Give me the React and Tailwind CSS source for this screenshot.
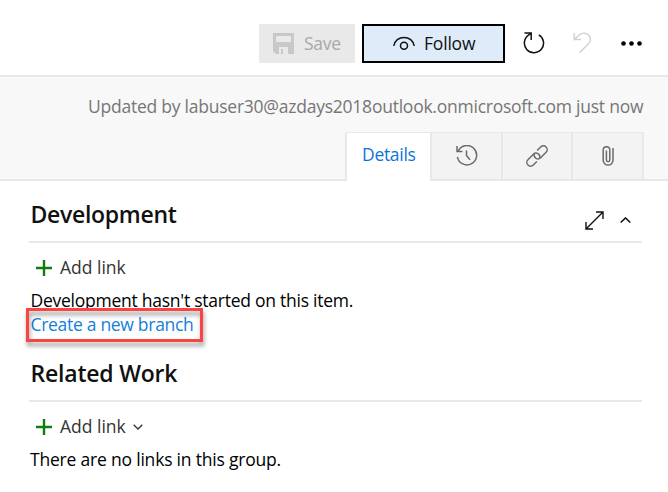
import React from "react";

function SaveIcon() {
  return (
    <svg className="h-[21px] w-[21px]" viewBox="0 0 21 21">
      <path fill="#c8c8c8" fillRule="evenodd" d="M0 0H21V21H3L0 18ZM3 3V9H18V3ZM6 14V21H8V16H10V21H15V14Z" />
    </svg>
  );
}

function EyeIcon() {
  return (
    <svg className="h-[16px] w-[22px]" viewBox="0 0 22 16" fill="none" stroke="#111" strokeWidth="1.5">
      <path d="M.8 10C1.6 4.600 6 1.400 11 1.400S20.400 4.600 21.200 10" />
      <circle cx="11" cy="9.800" r="3.500" />
    </svg>
  );
}

function RefreshIcon() {
  return (
    <svg className="h-[22px] w-[22px]" viewBox="0 0 22 22" fill="none" stroke="#111" strokeWidth="1.5">
      <path d="M15.800 2.800A9.600 9.600 0 1 1 5.500 3.200L8 1.300M1.500 1H8.200V8" />
    </svg>
  );
}

function UndoIcon() {
  return (
    <svg className="h-[22px] w-[19px]" viewBox="0 0 19 22" fill="none" stroke="#d0d0d0" strokeWidth="1.4">
      <path d="M1.200 1V7.500H8M1.200 7.500L6.300 3C9 .6 13 .4 15.500 3C18 5.500 18 9.300 15.500 11.800L6.500 20.800" />
    </svg>
  );
}

function HistoryIcon() {
  return (
    <svg className="h-[22px] w-[22px]" viewBox="0 0 22 22" fill="none" stroke="#6b6b6b" strokeWidth="1.5">
      <path d="M1 1V6.500H6.500M2 6.500A9.700 9.700 0 1 1 1.400 11.800M10.500 5.500V10.500L14 14.800" />
    </svg>
  );
}

function LinkIcon() {
  return (
    <svg className="h-[22px] w-[22px] overflow-visible" viewBox="0 0 22 22" fill="none" stroke="#6b6b6b" strokeWidth="1.5">
      <g transform="rotate(-45 11 11)">
        <path d="M7 14.800H2A3.800 3.800 0 0 1 2 7.200H9.700A3.800 3.800 0 0 1 11.500 14.300" />
        <path d="M15 7.200H20A3.800 3.800 0 0 1 20 14.800H12.300A3.800 3.800 0 0 1 10.500 7.700" />
      </g>
    </svg>
  );
}

function ClipIcon() {
  return (
    <svg className="h-[20px] w-[12px]" viewBox="0 0 12 20" fill="none" stroke="#6b6b6b" strokeWidth="1.5">
      <path d="M11 2V14.200A4.800 4.800 0 0 1 1.200 14.200V4A3.200 3.200 0 0 1 7.800 4V14A1.700 1.700 0 0 1 4.400 14V4.500" />
    </svg>
  );
}

function ExpandIcon() {
  return (
    <svg className="h-[19px] w-[19px]" viewBox="0 0 19 19" fill="none" stroke="#111" strokeWidth="1.4">
      <path d="M1 18L18 1M11 1H18V8M1 11V18H8" />
    </svg>
  );
}

function AddLink({ menu }) {
  return (
    <div className="flex h-6 items-center pl-[7px] text-[#333]">
      <svg className="h-4 w-4" viewBox="0 0 16 16" stroke="#107c10" strokeWidth="2.4">
        <path d="M8 0V16M0 8H16" />
      </svg>
      <span className="mb-[2px] ml-2 w-[67px] text-[17.5px]">Add link</span>
      {menu && (
        <svg className="ml-1.5 h-[6px] w-[10px]" viewBox="0 0 10 6" fill="none" stroke="#333" strokeWidth="1.3">
          <path d="M.7 .7L5 5L9.300 .7" />
        </svg>
      )}
    </div>
  );
}

export default function App() {
  return (
    <div className="h-[492px] w-[668px] overflow-hidden whitespace-nowrap bg-white font-['Open_Sans','Noto_Sans',sans-serif] text-[17.5px] leading-6 text-[#111]">
      <header className="flex h-[77px] border-b-2 border-[#e8e8e8] pl-[259px] pt-6">
        <button className="flex h-[39px] w-24 items-center bg-[#e9e9e9] pl-3.5 text-[#a8a8a8]">
          <SaveIcon />
          <span className="mb-[2px] ml-[10px] tracking-[-0.3px]">Save</span>
        </button>
        <button className="ml-[7px] flex h-[39px] w-[143px] items-center border-2 border-black bg-[#deebf9] pl-[29px]">
          <EyeIcon />
          <span className="mb-[2px] ml-[9px] tracking-[-0.2px]">Follow</span>
        </button>
        <div className="flex h-[38px] items-center pl-[18px]">
          <RefreshIcon />
          <span className="ml-[28px]"><UndoIcon /></span>
          <svg className="ml-[29px] h-[5px] w-[21px]" viewBox="0 0 21 5">
            <circle cx="2.500" cy="2.500" r="2.300" />
            <circle cx="10.500" cy="2.500" r="2.300" />
            <circle cx="18.500" cy="2.500" r="2.300" />
          </svg>
        </div>
      </header>

      <section className="flex h-[104px] flex-col bg-[#f8f8f8]">
        <div className="flex h-[55px] pl-[88px] pt-[17px] tracking-[-0.24px] text-[#767676]">
          Updated by labuser30@azdays2018outlook.onmicrosoft.com just now
        </div>
        <div className="flex h-[49px]">
          <div className="w-[345px] border-b-2 border-[#e8e8e8]" />
          <div className="flex w-[85px] border-l-2 border-t border-[#e8e8e8] bg-white pl-[15px] pt-[9px] tracking-[-0.3px] text-[#0a74d6]">
            Details
          </div>
          <div className="flex w-[73px] items-center justify-center border-x-2 border-b-2 border-t border-[#e8e8e8] bg-[#f3f3f3]"><HistoryIcon /></div>
          <div className="flex w-[70px] items-center justify-center border-b-2 border-r-2 border-t border-[#e8e8e8] bg-[#f3f3f3]"><LinkIcon /></div>
          <div className="flex w-[71px] items-center justify-center border-b-2 border-r-2 border-t border-[#e8e8e8] bg-[#f3f3f3]"><ClipIcon /></div>
          <div className="flex-1 border-b-2 border-[#e8e8e8]" />
        </div>
      </section>

      <main className="ml-[29px] w-[613px]">
        <div className="flex h-[62px] border-b-2 border-[#e8e8e8] pt-[21px]">
          <h2 className="w-[556px] pl-[1.5px] text-[23px] font-semibold tracking-[-0.3px]">Development</h2>
          <div className="flex h-[36px] items-center">
            <ExpandIcon />
            <svg className="ml-[16px] h-[6px] w-[11px]" viewBox="0 0 11 6" fill="none" stroke="#111" strokeWidth="1.5">
              <path d="M.7 5.500L5.500 .9L10.300 5.500" />
            </svg>
          </div>
        </div>
        <div className="pt-[13px]"><AddLink /></div>
        <div className="relative pl-[1.5px] pt-[8px] text-black">
          <p className="tracking-[-0.25px]">Development hasn't started on this item.</p>
          <a className="block text-[#1380da] tracking-[-0.3px]">Create a new branch</a>
          <div className="absolute -left-[3px] top-[28px] h-[34px] w-[177px] border-3 border-[#fb4343] [filter:drop-shadow(1px_4px_2px_rgba(0,0,0,.4))]" />
        </div>
        <div className="flex h-[66px] border-b-2 border-[#e8e8e8] pt-[25px]">
          <h2 className="pl-[1.5px] text-[23px] font-semibold tracking-[-0.2px]">Related Work</h2>
        </div>
        <div className="pt-[13px]"><AddLink menu /></div>
        <p className="pl-[1px] pt-[8px] text-black tracking-[-0.2px]">There are no links in this group.</p>
      </main>
    </div>
  );
}
